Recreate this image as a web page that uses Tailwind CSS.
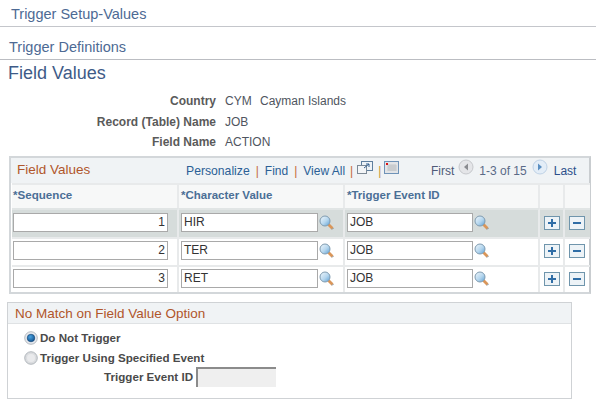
<!DOCTYPE html>
<html><head><meta charset="utf-8"><script src="https://cdn.jsdelivr.net/npm/@tailwindcss/browser@4"></script></head>
<body class="bg-white w-[596px] h-[404px] overflow-hidden font-['Liberation_Sans',Arial,sans-serif] text-[12px] text-[#333]">
<div class="h-[27px] border-b border-[#c4c6cb] pl-[11px] pt-[6px] text-[14.5px] leading-[17px] text-[#4d6a94]">Trigger Setup-Values</div>
<div class="h-[33px] border-b border-[#bbbdc2] pl-[9px] pt-[12px] text-[14.5px] leading-[17px] text-[#4d6a94]">Trigger Definitions</div>
<div class="pl-[8px] pt-[2px] h-[30px] text-[18px] leading-[22px] text-[#3e5b88]">Field Values</div>
<div class="grid grid-cols-[216px_auto] gap-x-[9px] auto-rows-[20px] items-center leading-[14px] h-[66px] pt-[1px]">
  <div class="font-bold text-right text-[#5a5a5a]">Country</div><div class="text-[#4f5560]">CYM <span class="ml-[5px]">Cayman Islands</span></div>
  <div class="font-bold text-right text-[#5a5a5a] pt-[1px]">Record (Table) Name</div><div class="text-[#4f5560] pt-[1px]">JOB</div>
  <div class="font-bold text-right text-[#5a5a5a] pt-[1px]">Field Name</div><div class="text-[#4f5560] pt-[1px]">ACTION</div>
</div>
<svg width="0" height="0" class="absolute"><defs>
  <linearGradient id="lens" x1="0" y1="0" x2="1" y2="1"><stop offset="0" stop-color="#f2f8fc"/><stop offset=".55" stop-color="#b5d6ee"/><stop offset="1" stop-color="#5b9fd4"/></linearGradient>
  <radialGradient id="dot" cx=".4" cy=".35" r=".7"><stop offset="0" stop-color="#4aa3e0"/><stop offset="1" stop-color="#0f4f8c"/></radialGradient>
  <g id="mag"><path d="M9.5 9.5L13.500 13.500" stroke="#d9965a" stroke-width="2.800"/><path d="M13 14.500l1.500-1.500" stroke="#7d8790" stroke-width="1"/><circle cx="6" cy="6" r="5" fill="url(#lens)" stroke="#7f9bb0"/></g>
  <g id="add"><rect x=".5" y=".5" width="15" height="13" fill="#edf3f7" stroke="#6f95ac"/><path d="M8 3v8M4 7h8" stroke="#2f6da6" stroke-width="2"/></g>
  <g id="del"><rect x=".5" y=".5" width="15" height="13" fill="#edf3f7" stroke="#6f95ac"/><path d="M4 7h8" stroke="#2f6da6" stroke-width="2"/></g>
</defs></svg>
<div class="ml-[9px] w-[582px] h-[138px] border-2 border-[#d3d7da] border-r-[#c9cdd0] bg-white flex flex-col">
  <div class="h-[25px] shrink-0 bg-[#f0f3f5] flex items-start relative">
    <span class="text-[13.5px] leading-[16px] mt-[4px] ml-[6px] text-[#b0562b] w-[169px]">Field Values</span>
    <div class="flex items-center mt-[5px] h-[16px] text-[#2b5f96] whitespace-pre">
      <span class="text-[12.2px]">Personalize</span><span class="text-[#c46a3a] mx-[6px]">|</span><span>Find</span><span class="text-[#c46a3a] mx-[6px]">|</span><span>View All</span><span class="text-[#c46a3a] ml-[5px] mr-[4px]">|</span>
      <svg width="16" height="14" class="-mt-[6px]" viewBox="0 0 16 14"><rect x="4.500" y=".5" width="11" height="9" fill="#eef3f7" stroke="#5f7f9e"/><rect x=".5" y="4.500" width="9" height="8" fill="#f3f5f7" stroke="#7d8a96"/><path d="M7 7l5-4M9 3h3v3" stroke="#35618f" fill="none"/></svg>
      <span class="text-[#c4963a] ml-[5px] mr-[3px]">|</span>
      <svg width="15" height="13" class="-mt-[7px]" viewBox="0 0 15 13"><rect x=".5" y=".5" width="14" height="12" fill="#e2e4e7" stroke="#6f93b8"/><path d="M3 5h10M3 7h10M3 9h10M5 3v7M7 3v7M9 3v7M11 3v7" stroke="#b3b7bb" stroke-width=".6"/><rect x="2" y="2" width="2" height="2" fill="#d11"/></svg>
    </div>
    <div class="absolute left-[420px] top-0 h-[25px] flex items-start text-[#4f5a78] whitespace-pre">
      <span class="mt-[5px] leading-[16px]">First</span>
      <svg width="16" height="16" viewBox="0 0 16 16" class="ml-[4px] mt-[1px]"><circle cx="8" cy="8" r="7" fill="#e4e5e8" stroke="#c6c8cc"/><path d="M10 4.500v7L6 8z" fill="#8a8c90"/></svg>
      <span class="ml-[5px] mt-[5px] leading-[16px] text-[#5a6a88]">1-3 of 15</span>
      <svg width="16" height="16" viewBox="0 0 16 16" class="ml-[5px] mt-[1px]"><circle cx="8" cy="8" r="7" fill="#e3edf7" stroke="#bfd2e6"/><path d="M6 4.500v7l4-3.500z" fill="#5b8fc2"/></svg>
      <span class="ml-[6px] mt-[5px] leading-[16px] text-[#2b4f8a]">Last</span>
    </div>
  </div>
  <div class="grid grid-cols-[167px_166px_195px_25px_25px] grid-rows-[25px_29px_28px_27px] gap-0 pl-[1px] flex-1 text-[#333]">
    <div class="bg-[#f7f8f8] border-t-2 border-r-2 border-[#e8eaeb] pl-[1px] pt-[3px] font-bold text-[11.6px] text-[#4b6f96] leading-[14px]">*Sequence</div>
    <div class="bg-[#f7f8f8] border-t-2 border-r-2 border-[#e8eaeb] pl-[2px] pt-[3px] font-bold text-[11.5px] text-[#4b6f96] leading-[14px]">*Character Value</div>
    <div class="bg-[#f7f8f8] border-t-2 border-r-2 border-[#e8eaeb] pl-[2px] pt-[3px] font-bold text-[11.5px] text-[#4b6f96] leading-[14px]">*Trigger Event ID</div>
    <div class="bg-[#f7f8f8] border-t-2 border-r-2 border-[#e8eaeb]"></div>
    <div class="bg-[#f7f8f8] border-t-2 border-[#e8eaeb]"></div>

    <div class="bg-[#d6dcdb] border-r-2 border-[#e8eaeb] border-t-2 border-t-[#e1e5e5] pl-[1px] pt-[3px]"><div class="w-[155px] h-[19px] border border-[#a9a9a9] bg-white text-right pr-[2px] leading-[17px]">1</div></div>
    <div class="bg-[#d6dcdb] border-r-2 border-[#e8eaeb] border-t-2 border-t-[#e1e5e5] pl-[2px] pt-[3px] flex items-start gap-[1px]"><div class="w-[137px] h-[19px] border border-[#a9a9a9] bg-white pl-[2px] leading-[17px]">HIR</div><svg width="15" height="15" class="mt-[2px]"><use href="#mag"/></svg></div>
    <div class="bg-[#d6dcdb] border-r-2 border-[#e8eaeb] border-t-2 border-t-[#e1e5e5] pl-[2px] pt-[3px] flex items-start gap-[1px]"><div class="w-[126px] h-[19px] border border-[#a9a9a9] bg-white pl-[2px] leading-[17px]">JOB</div><svg width="15" height="15" class="mt-[2px]"><use href="#mag"/></svg></div>
    <div class="bg-[#d6dcdb] border-r-2 border-[#e8eaeb] border-t-2 border-t-[#e1e5e5] pl-[4px] pt-[6px]"><svg width="16" height="14" class="block"><use href="#add"/></svg></div>
    <div class="bg-[#d6dcdb] border-t-2 border-t-[#e1e5e5] pl-[4px] pt-[6px]"><svg width="16" height="14" class="block"><use href="#del"/></svg></div>

    <div class="border-r-2 border-t-2 border-[#e8eaeb] pl-[1px] pt-[2px]"><div class="w-[155px] h-[19px] border border-[#a9a9a9] bg-white text-right pr-[2px] leading-[17px]">2</div></div>
    <div class="border-r-2 border-t-2 border-[#e8eaeb] pl-[2px] pt-[2px] flex items-start gap-[1px]"><div class="w-[137px] h-[19px] border border-[#a9a9a9] bg-white pl-[2px] leading-[17px]">TER</div><svg width="15" height="15" class="mt-[2px]"><use href="#mag"/></svg></div>
    <div class="border-r-2 border-t-2 border-[#e8eaeb] pl-[2px] pt-[2px] flex items-start gap-[1px]"><div class="w-[126px] h-[19px] border border-[#a9a9a9] bg-white pl-[2px] leading-[17px]">JOB</div><svg width="15" height="15" class="mt-[2px]"><use href="#mag"/></svg></div>
    <div class="border-r-2 border-t-2 border-[#e8eaeb] pl-[4px] pt-[5px]"><svg width="16" height="14" class="block"><use href="#add"/></svg></div>
    <div class="border-t-2 border-[#e8eaeb] pl-[4px] pt-[5px]"><svg width="16" height="14" class="block"><use href="#del"/></svg></div>

    <div class="border-r-2 border-t-2 border-[#e8eaeb] pl-[1px] pt-[2px]"><div class="w-[155px] h-[19px] border border-[#a9a9a9] bg-white text-right pr-[2px] leading-[17px]">3</div></div>
    <div class="border-r-2 border-t-2 border-[#e8eaeb] pl-[2px] pt-[2px] flex items-start gap-[1px]"><div class="w-[137px] h-[19px] border border-[#a9a9a9] bg-white pl-[2px] leading-[17px]">RET</div><svg width="15" height="15" class="mt-[2px]"><use href="#mag"/></svg></div>
    <div class="border-r-2 border-t-2 border-[#e8eaeb] pl-[2px] pt-[2px] flex items-start gap-[1px]"><div class="w-[126px] h-[19px] border border-[#a9a9a9] bg-white pl-[2px] leading-[17px]">JOB</div><svg width="15" height="15" class="mt-[2px]"><use href="#mag"/></svg></div>
    <div class="border-r-2 border-t-2 border-[#e8eaeb] pl-[4px] pt-[5px]"><svg width="16" height="14" class="block"><use href="#add"/></svg></div>
    <div class="border-t-2 border-[#e8eaeb] pl-[4px] pt-[5px]"><svg width="16" height="14" class="block"><use href="#del"/></svg></div>
  </div>
</div>
<div class="ml-[7px] mt-[8px] w-[565px] h-[97px] border border-[#cfd2d5] text-[11.6px]">
  <div class="h-[21px] bg-[#f0f3f5] border-b border-[#dfe2e4] pl-[7px] pt-[3px] text-[13.5px] leading-[16px] text-[#b0562b]">No Match on Field Value Option</div>
  <div class="flex items-center h-[20px] mt-[4px] pl-[16px] font-bold text-[#4a4a4a]">
    <svg width="14" height="14" viewBox="0 0 14 14"><circle cx="7" cy="7" r="6.300" fill="#e6e9ee" stroke="#a5abb1" stroke-width=".8"/><circle cx="7" cy="7" r="3.800" fill="url(#dot)" stroke="#0d3f70" stroke-width=".6"/></svg><span class="ml-[2px]">Do Not Trigger</span>
  </div>
  <div class="flex items-center h-[20px] pl-[16px] font-bold text-[#4a4a4a]">
    <svg width="14" height="14" viewBox="0 0 14 14"><circle cx="7" cy="7" r="6.300" fill="#dadcdf" stroke="#a5abb1" stroke-width=".8"/><circle cx="7" cy="7" r="4" fill="#e9eaec"/></svg><span class="ml-[2px]">Trigger Using Specified Event</span>
  </div>
  <div class="flex items-start h-[20px] font-bold text-[#4a4a4a] -mt-[1px]">
    <span class="w-[185px] text-right leading-[20px]">Trigger Event ID</span>
    <div class="ml-[3px] w-[80px] h-[20px] bg-[#efefef] border-l-2 border-t-2 border-[#8b8b8b]"></div>
  </div>
</div>
</body></html>
